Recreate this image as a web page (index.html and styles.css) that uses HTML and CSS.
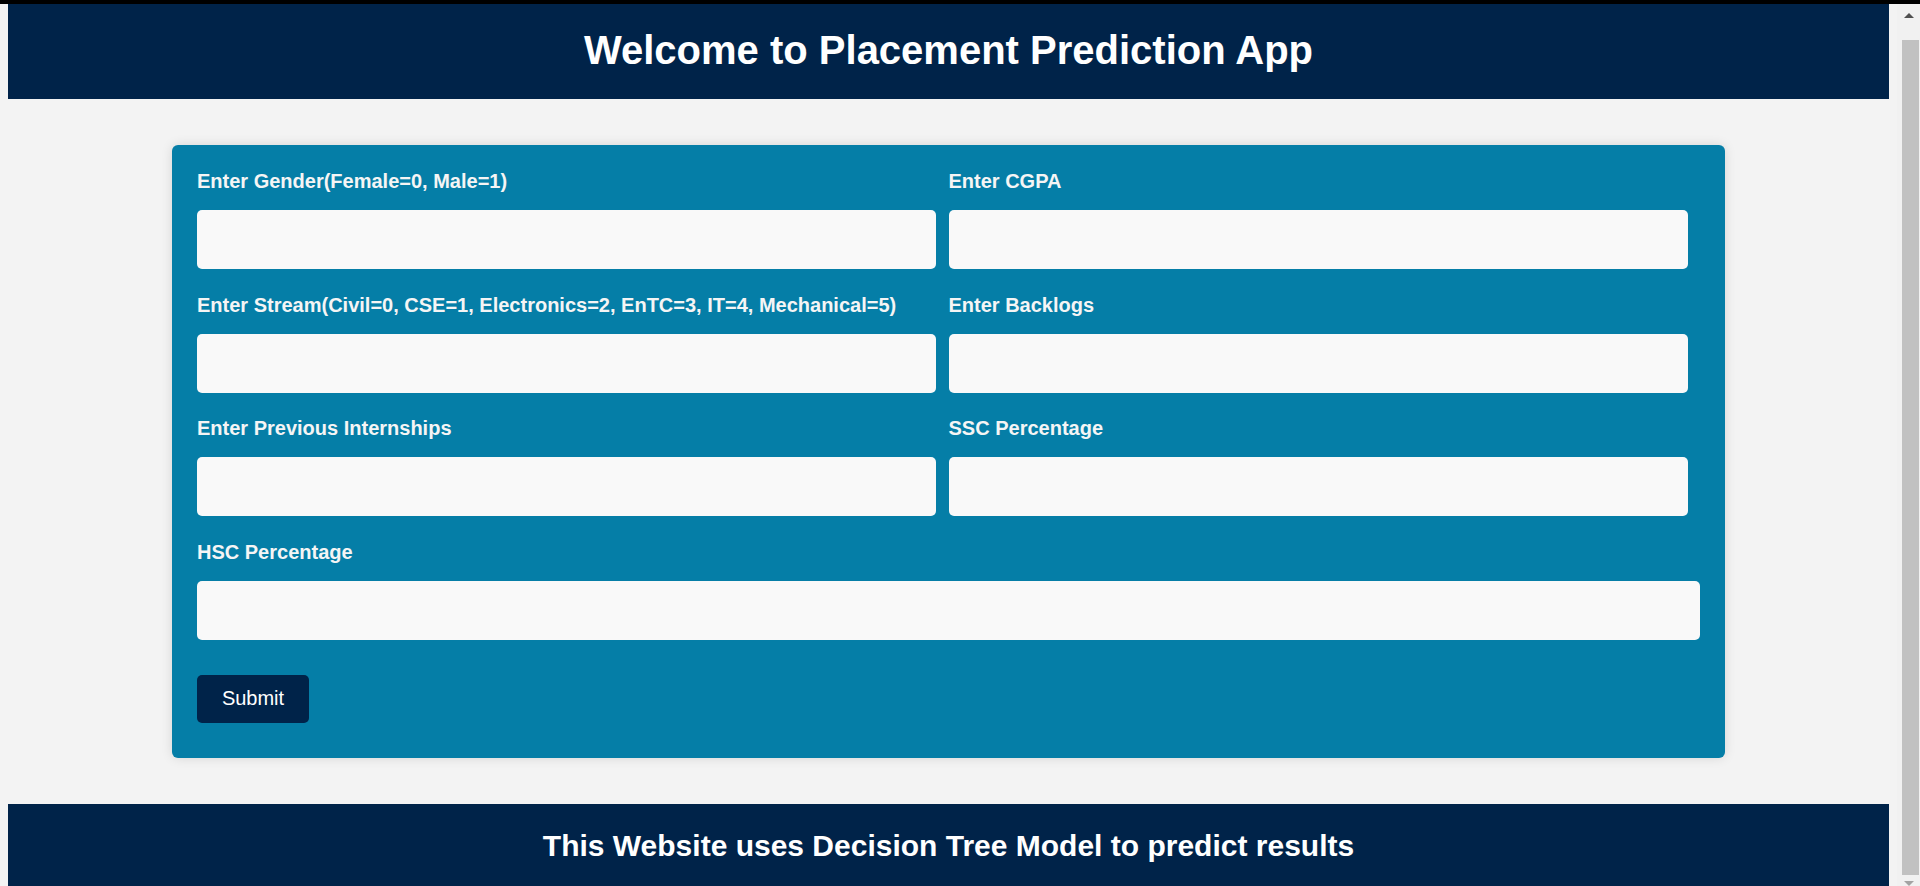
FILE: index.html
```html
<!DOCTYPE html>
<html lang="en">
<head>
<meta charset="utf-8">
<title>Placement Prediction App</title>
<link rel="stylesheet" href="styles.css">
</head>
<body>
<div class="topline"></div>
<header class="site-header">
  <h1 class="site-title">Welcome to Placement Prediction App</h1>
</header>
<main class="content">
  <form class="card">
    <div class="form-grid">
      <div class="field">
        <label class="field-label">Enter Gender(Female=0, Male=1)</label>
        <input class="field-input" type="text">
      </div>
      <div class="field">
        <label class="field-label">Enter CGPA</label>
        <input class="field-input" type="text">
      </div>
      <div class="field">
        <label class="field-label">Enter Stream(Civil=0, CSE=1, Electronics=2, EnTC=3, IT=4, Mechanical=5)</label>
        <input class="field-input" type="text">
      </div>
      <div class="field">
        <label class="field-label">Enter Backlogs</label>
        <input class="field-input" type="text">
      </div>
      <div class="field">
        <label class="field-label">Enter Previous Internships</label>
        <input class="field-input" type="text">
      </div>
      <div class="field">
        <label class="field-label">SSC Percentage</label>
        <input class="field-input" type="text">
      </div>
      <div class="field field-wide">
        <label class="field-label">HSC Percentage</label>
        <input class="field-input" type="text">
      </div>
    </div>
    <button class="submit-btn" type="button">Submit</button>
  </form>
</main>
<footer class="site-footer">
  <h2 class="footer-text">This Website uses Decision Tree Model to predict results</h2>
</footer>
<div class="scrollbar">
  <div class="scroll-arrow scroll-up"></div>
  <div class="scroll-thumb"></div>
  <div class="scroll-arrow scroll-down"></div>
</div>
</body>
</html>
```

FILE: styles.css
```css
html {
  overflow: hidden;
  background: #f3f3f3;
}

body {
  margin: 4px 31px 8px 8px;
  background: #f3f3f3;
  font-family: "Liberation Sans", Arial, sans-serif;
}

.topline {
  position: fixed;
  top: 0;
  left: 0;
  right: 0;
  height: 4px;
  background: #000;
  z-index: 5;
}

.site-header {
  background: #002349;
  height: 95px;
  display: flex;
  justify-content: center;
  align-items: flex-start;
}

.site-title {
  margin: 0;
  padding-top: 23px;
  color: #fff;
  font-size: 40px;
  line-height: 46px;
  font-weight: bold;
}

.content {
  padding: 46px 0;
  display: flex;
  justify-content: center;
}

.card {
  width: 1503px;
  padding: 25px;
  background: #057ea7;
  border-radius: 6px;
  box-shadow: 0 0 12px rgba(0, 0, 0, 0.12);
}

.form-grid {
  display: grid;
  grid-template-columns: 1fr 1fr;
}

.field {
  display: flex;
  flex-direction: column;
  margin-bottom: 24.5px;
}

.field-wide {
  grid-column: 1 / 3;
}

.field-label {
  display: block;
  color: #f5f5f5;
  font-size: 20px;
  line-height: 23px;
  font-weight: bold;
  margin-bottom: 17px;
  white-space: nowrap;
}

.field-input {
  box-sizing: border-box;
  width: calc(100% - 12.5px);
  height: 59px;
  border: none;
  border-radius: 5px;
  background: #f9f9f9;
  padding: 0 12px;
  font-family: inherit;
  font-size: 20px;
  outline: none;
}

.field-wide .field-input {
  width: 100%;
}

.submit-btn {
  display: block;
  margin: 10.5px 0 10px;
  width: 112px;
  height: 48px;
  border: none;
  border-radius: 5px;
  background: #002349;
  color: #fff;
  font-family: inherit;
  font-size: 20px;
  padding: 0;
}

.site-footer {
  background: #002349;
  display: flex;
  justify-content: center;
  padding: 24px 0 30px;
}

.footer-text {
  margin: 0;
  color: #fff;
  font-size: 30px;
  line-height: 35px;
  font-weight: bold;
}

.scrollbar {
  position: fixed;
  top: 4px;
  right: 0;
  bottom: 0;
  width: 23px;
  background: #f1f1f1;
  display: flex;
  flex-direction: column;
  align-items: center;
}

.scroll-arrow {
  width: 0;
  height: 0;
  border-left: 5px solid transparent;
  border-right: 5px solid transparent;
}

.scroll-up {
  margin-top: 9px;
  border-bottom: 5px solid #505050;
}

.scroll-down {
  margin-top: 6px;
  border-top: 5px solid #a3a3a3;
}

.scroll-thumb {
  margin-top: 22px;
  width: 17px;
  margin-left: 4px;
  height: 835px;
  background: #c1c1c1;
}
```
